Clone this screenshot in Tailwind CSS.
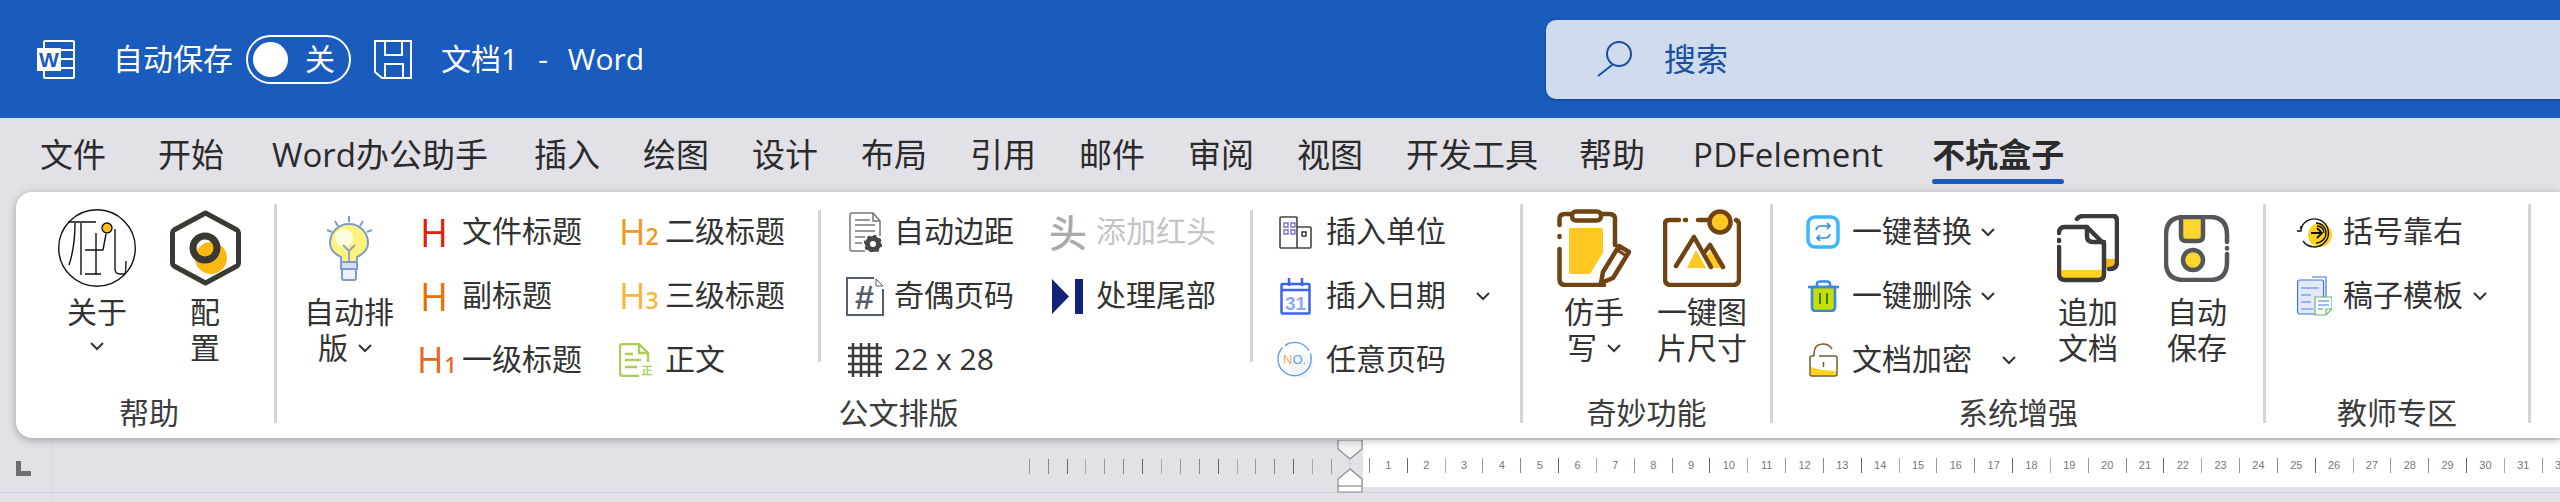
<!DOCTYPE html>
<html lang="zh-CN">
<head>
    <meta charset="UTF-8">
    <title>文档1 - Word</title>
    <script src="https://cdn.jsdelivr.net/npm/@tailwindcss/browser@4"></script>
</head>
<body class="w-[2560px] h-[502px] overflow-hidden bg-[#e3e1e8] text-[#333] font-['Open_Sans','Noto_Sans_CJK_SC',sans-serif]">
    <!-- Title bar -->
    <header class="flex items-center h-[118px] bg-[#1a5bbe] text-white text-[30px] leading-none">
        <svg class="ml-[37px] shrink-0" width="38" height="39" viewBox="0 0 38 39" fill="none" stroke="white" stroke-width="2">
            <rect x="7" y="1" width="30" height="37" rx="1"/>
            <path d="M24 10H37M24 19H37M24 28H37"/>
            <rect x="0" y="8" width="24" height="23" fill="white" stroke="none"/>
            <text x="12" y="27" text-anchor="middle" font-size="21" font-weight="700" fill="#1a5bbe" stroke="none" font-family="Liberation Sans">W</text>
        </svg>
        <span class="ml-[38px]">自动保存</span>
        <div class="ml-[13px] flex items-center w-[105px] h-[49px] rounded-full border-2 border-white pl-[5px]">
            <div class="w-[35px] h-[35px] rounded-full bg-white"></div>
            <span class="ml-[17px]">关</span>
        </div>
        <svg class="ml-[23px] shrink-0" width="38" height="39" viewBox="0 0 38 39" fill="none" stroke="white" stroke-width="2">
            <path d="M1 1H37V38H8L1 32Z"/>
            <path d="M11 1V15H28V1M11 38V24H29V38"/>
        </svg>
        <span class="ml-[29px]">文档1</span>
        <span class="ml-[20px]">-</span>
        <span class="ml-[20px]">Word</span>
        <div class="ml-auto flex items-center w-[1014px] h-[79px] rounded-l-[10px] bg-[#d0dbee] shadow-[0_1px_3px_rgba(0,0,0,0.3)] text-[#1a4f9f] text-[32px]">
            <svg class="ml-[51px]" width="36" height="36" viewBox="0 0 36 36" fill="none" stroke="#1a4f9f" stroke-width="2">
                <circle cx="22" cy="13" r="12"/>
                <path d="M15 24L1 35"/>
            </svg>
            <span class="ml-[31px]">搜索</span>
        </div>
    </header>

    <!-- Tabs -->
    <nav class="flex items-start h-[74px] pt-[15px] pl-[40px] gap-[43px] text-[33px] leading-[44px] text-[#2b2b2b]">
        <span class="mr-[9px]">文件</span>
        <span class="mr-[5px]">开始</span>
        <span class="mr-[3px]">Word办公助手</span>
        <span>插入</span>
        <span>绘图</span>
        <span>设计</span>
        <span>布局</span>
        <span>引用</span>
        <span>邮件</span>
        <span>审阅</span>
        <span>视图</span>
        <span class="mr-[-2px]">开发工具</span>
        <span class="mr-[5px]">帮助</span>
        <span class="mr-[6px] tracking-[0.3px]">PDFelement</span>
        <div class="flex flex-col">
            <span class="font-bold">不坑盒子</span>
            <div class="mt-[2px] h-[5px] rounded-sm bg-[#1a5bbe]"></div>
        </div>
    </nav>

    <!-- Ribbon -->
    <main class="relative z-10 flex ml-4 h-[246px] rounded-l-[16px] bg-white shadow-[0_2px_8px_rgba(0,0,0,0.3)] text-[30px] leading-none">
        <!-- 帮助 -->
        <section class="flex flex-col w-[258px] shrink-0">
            <div class="flex h-[203px] pt-2 pl-[31px]">
                <div class="flex flex-col items-center w-[100px] leading-[36px]">
                    <div class="flex items-center justify-center h-[94px] pt-[2px]">
                        <svg width="78" height="78" viewBox="0 0 78 78" fill="none" stroke="#111" stroke-width="1.4">
                            <circle cx="39" cy="39" r="38.3"/>
                            <path d="M10 13H38M17 14Q17 38 11 56M23 14V66M38 24V66M27 41H45M27 65H43M48 25L45 41M57 20V60Q57 65 62 65H66Q68 65 68 52"/>
                            <circle cx="49" cy="19" r="5" fill="#fdc010"/>
                        </svg>
                    </div>
                    <span>关于</span>
                    <svg class="mt-[12px]" width="14" height="9" viewBox="0 0 14 9" fill="none" stroke="#333" stroke-width="2"><path d="M1 1L7 7L13 1"/></svg>
                </div>
                <div class="flex flex-col items-center w-[100px] ml-2 leading-[36px]">
                    <div class="flex items-center justify-center h-[94px] pt-[2px]">
                        <svg width="71" height="76" viewBox="0 0 71 76" fill="none">
                            <circle cx="41" cy="48" r="16" fill="#fdb913"/>
                            <path d="M35.5 3L67 20Q68.5 21 68.5 23V53Q68.5 55 67 56L35.5 73L4 56Q2.5 55 2.5 53V23Q2.5 21 4 20Z" stroke="#3a3a32" stroke-width="5" stroke-linejoin="round"/>
                            <circle cx="35" cy="38" r="12" stroke="#3a3a32" stroke-width="7"/>
                        </svg>
                    </div>
                    <span>配</span>
                    <span>置</span>
                </div>
            </div>
            <div class="h-[36px] flex items-center justify-center pl-2 text-[#3c3c3c]">帮助</div>
        </section>
        <div class="w-[3px] h-[219px] mt-3 bg-[#d4d4d4] shrink-0"></div>

        <!-- 公文排版 -->
        <section class="flex flex-col w-[1243px] shrink-0">
            <div class="flex h-[203px] pt-2 pl-[22px]">
                <div class="flex flex-col items-center w-[100px] leading-[36px] shrink-0">
                    <div class="flex items-center justify-center h-[94px] pt-[2px]">
                        <svg width="47" height="65" viewBox="0 0 47 65" fill="none">
                            <path d="M23 0V6M9 5L12 10M37 5L34 10M1 14L6 16M46 14L41 16" stroke="#7e9cc9" stroke-width="2"/>
                            <path d="M15 46V41Q4 36 4 27A19 19 0 0 1 42 27Q42 36 31 41V46Z" fill="#fff27f" stroke="#7e9cc9" stroke-width="2"/>
                            <circle cx="18" cy="22" r="9" fill="#fffde0"/>
                            <path d="M23 46V35L17 29M23 35L29 29" stroke="#8ea6cc" stroke-width="2"/>
                            <rect x="15" y="46" width="16" height="7" fill="#d9dcf5" stroke="#7e9cc9" stroke-width="2"/>
                            <rect x="16" y="53" width="14" height="11" rx="2" fill="#eef0fb" stroke="#7e9cc9" stroke-width="2"/>
                        </svg>
                    </div>
                    <span>自动排</span>
                    <div class="flex items-center pr-2">
                        <span>版</span>
                        <svg class="ml-[10px]" width="14" height="9" viewBox="0 0 14 9" fill="none" stroke="#333" stroke-width="2"><path d="M1 1L7 7L13 1"/></svg>
                    </div>
                </div>

                <div class="ml-[18px] shrink-0">
                    <div class="flex items-center h-16">
                        <span class="w-[34px] mr-[11px] text-center text-[38px] font-medium text-[#e0200f]">H</span><span class="mb-[3px]">文件标题</span>
                    </div>
                    <div class="flex items-center h-16">
                        <span class="w-[34px] mr-[11px] text-center text-[38px] font-medium text-[#e87000]">H</span><span class="mb-[3px]">副标题</span>
                    </div>
                    <div class="flex items-center h-16">
                        <span class="w-[34px] mr-[11px] flex items-baseline text-[36px] font-medium text-[#e8671e]">H<span class="ml-[1px] text-[21px] font-semibold">1</span></span><span class="mb-[3px]">一级标题</span>
                    </div>
                </div>

                <div class="ml-[37px] shrink-0">
                    <div class="flex items-center h-16">
                        <span class="w-[34px] mr-3 flex items-baseline text-[36px] font-medium text-[#ee9a1e]">H<span class="text-[23px] font-semibold">2</span></span><span class="mb-[3px]">二级标题</span>
                    </div>
                    <div class="flex items-center h-16">
                        <span class="w-[34px] mr-3 flex items-baseline text-[36px] font-medium text-[#f3b83a]">H<span class="text-[23px] font-semibold">3</span></span><span class="mb-[3px]">三级标题</span>
                    </div>
                    <div class="flex items-center h-16">
                        <svg class="mr-3" width="34" height="34" viewBox="0 0 34 34" fill="none" stroke="#a9cf55" stroke-width="2.4">
                            <path d="M29 19V10L20 1H4Q1 1 1 4V30Q1 33 4 33H20"/>
                            <path d="M20 1V10H29M6 11H14M6 17H22M6 24H18"/>
                            <text x="28" y="32" text-anchor="middle" font-size="11" font-weight="700" fill="#a9cf55" stroke="none">正</text>
                        </svg>
                        <span class="mb-[3px]">正文</span>
                    </div>
                </div>

                <div class="w-[3px] h-[152px] mt-[10px] ml-[33px] bg-[#d4d4d4] shrink-0"></div>

                <div class="ml-[25px] shrink-0">
                    <div class="flex items-center h-16">
                        <span class="flex justify-center w-[38px] mr-[10px]">
                            <svg width="33" height="40" viewBox="0 0 33 40" fill="none" stroke="#777" stroke-width="1.5">
                                <path d="M16 39H3Q1 39 1 37V3Q1 1 3 1H24L31 9V24"/>
                                <path d="M24 1V9H31M6 8H21M6 13H26M6 19H26M6 25H16M6 31H13"/>
                                <circle cx="24" cy="32" r="5.5" stroke="#474747" stroke-width="5"/>
                                <circle cx="24" cy="32" r="8" stroke="#474747" stroke-width="2.4" stroke-dasharray="3 3.3"/>
                            </svg>
                        </span>
                        <span class="mb-[3px]">自动边距</span>
                    </div>
                    <div class="flex items-center h-16">
                        <svg class="mr-[10px]" width="38" height="39" viewBox="0 0 38 39" fill="none" stroke="#555f6e" stroke-width="2">
                            <path d="M37 12V38H1V1H28"/>
                            <path d="M30 2V9H37L30 2Z" stroke-width="1"/>
                            <text x="18" y="32" text-anchor="middle" font-size="34" font-weight="700" font-style="italic" fill="#555f6e" stroke="none" font-family="Liberation Sans">#</text>
                        </svg>
                        <span class="mb-[3px]">奇偶页码</span>
                    </div>
                    <div class="flex items-center h-16">
                        <span class="flex justify-center w-[38px] mr-[10px]">
                            <svg width="34" height="34" viewBox="0 0 34 34" fill="none" stroke="#3a3a3a" stroke-width="2.4">
                                <path d="M5 0V34M13 0V34M21 0V34M29 0V34M0 5H34M0 13H34M0 21H34M0 29H34"/>
                            </svg>
                        </span>
                        <span class="mb-[3px]">22 x 28</span>
                    </div>
                </div>

                <div class="ml-[35px] shrink-0">
                    <div class="flex items-center h-16 text-[#c4c4c4]">
                        <span class="w-[36px] mr-[11px] text-center text-[38px] font-medium text-[#aaa]">头</span><span class="mb-[3px]">添加红头</span>
                    </div>
                    <div class="flex items-center h-16">
                        <span class="flex justify-center w-[36px] mr-[11px]">
                            <svg width="31" height="35" viewBox="0 0 31 35" fill="#14237a"><path d="M0 0L17 17.5L0 35Z"/><rect x="23" y="0" width="8" height="35"/></svg>
                        </span>
                        <span class="mb-[3px]">处理尾部</span>
                    </div>
                </div>

                <div class="w-[3px] h-[152px] mt-[10px] ml-[34px] bg-[#d4d4d4] shrink-0"></div>

                <div class="ml-[24px] shrink-0">
                    <div class="flex items-center h-16">
                        <span class="flex justify-center w-[37px] mr-3">
                            <svg width="33" height="33" viewBox="0 0 33 33" fill="none" stroke="#444" stroke-width="1.6">
                                <path d="M18 32H2Q1 32 1 31V2Q1 1 2 1H17Q18 1 18 2V32H31Q32 32 32 31V12Q32 11 31 11H18"/>
                                <path d="M5 7H9V11H5ZM12 7H16V11H12ZM5 14H9V18H5ZM12 14H16V18H12Z" stroke="#7a6fd8" stroke-width="1.4"/>
                                <rect x="23" y="16" width="4" height="4"/>
                            </svg>
                        </span>
                        <span class="mb-[3px]">插入单位</span>
                    </div>
                    <div class="flex items-center h-16">
                        <span class="flex justify-center w-[37px] mr-3">
                            <svg width="31" height="37" viewBox="0 0 31 37" fill="none" stroke="#3b63f0" stroke-width="2.5">
                                <rect x="1.5" y="6" width="28" height="29.5" rx="1"/>
                                <path d="M2 12H29M9 0V8M22 0V8"/>
                                <text x="15.5" y="32" text-anchor="middle" font-size="19" font-weight="700" fill="#8ea9f5" stroke="none" font-family="Liberation Sans">31</text>
                            </svg>
                        </span>
                        <span class="mb-[3px]">插入日期</span>
                        <svg class="ml-[30px]" width="14" height="9" viewBox="0 0 14 9" fill="none" stroke="#333" stroke-width="2"><path d="M1 1L7 7L13 1"/></svg>
                    </div>
                    <div class="flex items-center h-16">
                        <span class="flex justify-center w-[37px] mr-3">
                            <svg width="40" height="40" viewBox="0 0 40 40" fill="none">
                                <circle cx="26" cy="27" r="13" fill="#f2f4fb"/>
                                <circle cx="19" cy="19" r="18" stroke="#5aa0f5" stroke-width="1.5" stroke-dasharray="70 3 30 3"/>
                                <text x="19" y="24" text-anchor="middle" font-size="14" fill="#5aa0f5" font-family="Liberation Sans"><tspan fill="#f4a85a">N</tspan>O.</text>
                            </svg>
                        </span>
                        <span class="mb-[3px]">任意页码</span>
                    </div>
                </div>
            </div>
            <div class="h-[36px] flex items-center justify-center text-[#3c3c3c]">公文排版</div>
        </section>
        <div class="w-[3px] h-[219px] mt-3 bg-[#d4d4d4] shrink-0"></div>

        <!-- 奇妙功能 -->
        <section class="flex flex-col w-[247px] shrink-0">
            <div class="flex h-[203px] pt-2 pl-[27px]">
                <div class="flex flex-col items-center w-[88px] leading-[36px]">
                    <div class="flex items-center justify-center h-[94px] pt-[2px]">
                        <svg width="74" height="78" viewBox="0 0 74 78" fill="none" stroke="#6f4312" stroke-width="4.5" stroke-linecap="round" stroke-linejoin="round">
                            <path d="M12 19H44Q46 19 46 21V44L33 65H14Q12 65 12 63V21Q12 19 14 19Z" fill="#ffc823" stroke="none"/>
                            <path d="M13 5H8Q2.5 5 2.5 10V16M2.5 27V28M2.5 40V70Q2.5 76 8 76H47"/>
                            <path d="M44 5H52Q58 5 58 10V36"/>
                            <rect x="15" y="2.5" width="29" height="9" rx="4" fill="#fff"/>
                            <path d="M44 74L46 63L62 37L72 43L56 69Z" fill="#fff"/>
                            <path d="M60 41L68 46" stroke-width="3"/>
                        </svg>
                    </div>
                    <span>仿手</span>
                    <div class="flex items-center">
                        <span>写</span>
                        <svg class="ml-[10px]" width="14" height="9" viewBox="0 0 14 9" fill="none" stroke="#333" stroke-width="2"><path d="M1 1L7 7L13 1"/></svg>
                    </div>
                </div>
                <div class="flex flex-col items-center w-[92px] ml-[18px] leading-[36px]">
                    <div class="flex items-center justify-center h-[94px] pt-[2px]">
                        <svg width="78" height="78" viewBox="0 0 78 78" fill="none" stroke="#6f4312" stroke-width="4.5" stroke-linecap="round" stroke-linejoin="round">
                            <path d="M16 11H6Q2 11 2 15V70Q2 76 8 76H70Q76 76 76 70V16Q76 12 73 11M22 11H23M35 11H46"/>
                            <circle cx="57" cy="13" r="10.5" fill="#ffc823"/>
                            <path d="M24 59L33 41L43 59ZM43 47L47 42L60 59H45Z" fill="#ffc823" stroke="none"/>
                            <path d="M13 57L31 28L48 58M41 44L47 36L60 58"/>
                        </svg>
                    </div>
                    <span>一键图</span>
                    <span>片尺寸</span>
                </div>
            </div>
            <div class="h-[36px] flex items-center justify-center text-[#3c3c3c]">奇妙功能</div>
        </section>
        <div class="w-[3px] h-[219px] mt-3 bg-[#d4d4d4] shrink-0"></div>

        <!-- 系统增强 -->
        <section class="flex flex-col w-[490px] shrink-0">
            <div class="flex h-[203px] pt-2 pl-[33px]">
                <div class="shrink-0">
                    <div class="flex items-center h-16">
                        <svg class="mr-3" width="34" height="34" viewBox="0 0 34 34" fill="none">
                            <rect x="2" y="2" width="30" height="30" rx="7" stroke="#3db5ff" stroke-width="3.5"/>
                            <path d="M10 15Q11 11 15 11H24M21 8L24 11L21 14M24 19Q23 23 19 23H11M14 20L11 23L14 26" stroke="#2f8fe8" stroke-width="1.7"/>
                        </svg>
                        <span class="mb-[3px]">一键替换</span>
                        <svg class="ml-[9px]" width="14" height="9" viewBox="0 0 14 9" fill="none" stroke="#333" stroke-width="2"><path d="M1 1L7 7L13 1"/></svg>
                    </div>
                    <div class="flex items-center h-16">
                        <span class="flex justify-center w-[34px] mr-3">
                            <svg width="31" height="32" viewBox="0 0 31 32" fill="none" stroke="#3a86e0" stroke-width="2.6">
                                <path d="M4 7V27Q4 31 8 31H23Q27 31 27 27V7Z" fill="#c4e000"/>
                                <path d="M0 7H31M9 7V4Q9 1.5 12 1.5H19Q22 1.5 22 4V7"/>
                                <path d="M12 13V24M19 13V24" stroke="#3a7a2a" stroke-width="2"/>
                            </svg>
                        </span>
                        <span class="mb-[3px]">一键删除</span>
                        <svg class="ml-[9px]" width="14" height="9" viewBox="0 0 14 9" fill="none" stroke="#333" stroke-width="2"><path d="M1 1L7 7L13 1"/></svg>
                    </div>
                    <div class="flex items-center h-16">
                        <span class="flex justify-center w-[34px] mr-3">
                            <svg width="29" height="34" viewBox="0 0 29 34" fill="none" stroke="#7b5a2a" stroke-width="1.5">
                                <path d="M2 24Q14 28 27 28V31Q27 32.5 25 32.5H4Q2 32.5 2 31Z" fill="#ffd21e" stroke="none"/>
                                <path d="M5 13V11Q5 1 14 1Q20 1 23 6"/>
                                <path d="M5 13H3Q1 13 1 15V31Q1 33 3 33H26Q28 33 28 31V15Q28 13 26 13H10M14 13H24"/>
                                <path d="M14.5 19V24"/>
                            </svg>
                        </span>
                        <span class="mb-[3px]">文档加密</span>
                        <svg class="ml-[30px]" width="14" height="9" viewBox="0 0 14 9" fill="none" stroke="#333" stroke-width="2"><path d="M1 1L7 7L13 1"/></svg>
                    </div>
                </div>
                <div class="flex flex-col items-center w-[70px] ml-[37px] leading-[36px] shrink-0">
                    <div class="flex items-center justify-center h-[94px] pt-[2px]">
                        <svg width="62" height="69" viewBox="0 0 62 69" fill="none" stroke="#3b3b3b" stroke-width="4.5" stroke-linecap="round" stroke-linejoin="round">
                            <path d="M48 45H58V52L51 54H48Z" fill="#fdb913" stroke="none"/>
                            <path d="M4 56H45V60Q45 64 41 64H8Q4 64 4 60Z" fill="#ffd21e" stroke="none"/>
                            <path d="M20 5Q22 2 26 2H56Q60 2 60 7V48Q60 55 52 55"/>
                            <path d="M2 19Q2 13 8 13H30L47 30V60Q47 66 41 66H8Q2 66 2 60V33M2 26V27"/>
                            <path d="M30 13V22Q30 28 36 28H47"/>
                        </svg>
                    </div>
                    <span>追加</span>
                    <span>文档</span>
                </div>
                <div class="flex flex-col items-center w-[70px] ml-[39px] leading-[36px] shrink-0">
                    <div class="flex items-center justify-center h-[94px] pt-[2px]">
                        <svg width="66" height="67" viewBox="0 0 66 67" fill="none" stroke="#54565c" stroke-width="4.5" stroke-linecap="round" stroke-linejoin="round">
                            <path d="M63 27V20Q63 2 46 2H20Q2 2 2 20V47Q2 65 20 65H46Q63 65 63 47V39M63 33V33.5"/>
                            <path d="M17 2H39V21Q39 26 34 26H22Q17 26 17 21Z" fill="#ffd630"/>
                            <circle cx="29" cy="45" r="10" fill="#ffd630"/>
                        </svg>
                    </div>
                    <span>自动</span>
                    <span>保存</span>
                </div>
            </div>
            <div class="h-[36px] flex items-center justify-center text-[#3c3c3c]">系统增强</div>
        </section>
        <div class="w-[3px] h-[219px] mt-3 bg-[#d4d4d4] shrink-0"></div>

        <!-- 教师专区 -->
        <section class="flex flex-col w-[262px] shrink-0">
            <div class="h-[203px] pt-2 pl-[31px]">
                <div class="flex items-center h-16">
                    <svg class="mr-[11px]" width="35" height="31" viewBox="0 0 35 31" fill="none" stroke="#111" stroke-width="1.4">
                        <circle cx="23" cy="18" r="12" fill="#ffd21e" stroke="none"/>
                        <path d="M4 12A14 14 0 1 1 6 24"/>
                        <path d="M4 9V14L0 14"/>
                        <path d="M19 6A9 9 0 0 1 19 26M20 9A7 7 0 0 1 27 16"/>
                        <path d="M14 16H24M20 11L25 16L20 21" stroke-width="1.8"/>
                    </svg>
                    <span class="mb-[3px]">括号靠右</span>
                </div>
                <div class="flex items-center h-16">
                    <svg class="mr-[11px]" width="35" height="40" viewBox="0 0 35 40" fill="none" stroke-width="1.2">
                        <path d="M15 1H29V22" stroke="#3b74ea"/>
                        <rect x="0.6" y="4" width="26" height="34" rx="2" fill="#e3e9f7" stroke="#3b74ea"/>
                        <path d="M4 12H22M4 19H14M4 26H14M4 33H16" stroke="#7ea2ee" stroke-width="1.5"/>
                        <path d="M18 21H35V33L29 39H18Z" fill="#fff" stroke="#66b36a"/>
                        <path d="M21 25H32M21 29H32M21 33H26" stroke="#3b74ea"/>
                        <path d="M29 39V33H35" stroke="#66b36a"/>
                    </svg>
                    <span class="mb-[3px]">稿子模板</span>
                    <svg class="ml-[10px]" width="14" height="9" viewBox="0 0 14 9" fill="none" stroke="#333" stroke-width="2"><path d="M1 1L7 7L13 1"/></svg>
                </div>
            </div>
            <div class="h-[36px] flex items-center justify-center text-[#3c3c3c]">教师专区</div>
        </section>
        <div class="w-[3px] h-[219px] mt-3 bg-[#d4d4d4] shrink-0"></div>
    </main>

    <!-- Ruler -->
    <div class="flex h-[55px] border-b border-[#d4d2da]">
        <div class="flex items-center w-[53px] pl-4 pt-[7px] border-r border-[#d8d6de] shrink-0">
            <svg width="15" height="15" viewBox="0 0 15 15" fill="#6e6e6e"><path d="M0 0H5V10H15V15H0Z"/></svg>
        </div>
        <div id="rulerLeft" class="flex justify-end items-center w-[1284px] pt-[3px] pr-[5px] shrink-0"></div>
        <svg class="mt-[2px] shrink-0" width="26" height="53" viewBox="0 0 26 53" fill="#fff" stroke="#8a8a8a" stroke-width="1.2">
            <path d="M1 0H25V9L13 19L1 9Z" fill="#f4f4f6"/>
            <path d="M13 19V29" stroke="#cfcfcf"/>
            <path d="M13 29L25 39V52H1V39Z"/>
            <path d="M1 46H25"/>
        </svg>
        <div id="rulerRight" class="flex items-center flex-1 h-[47px] mt-[2px] pl-[6px] pt-[3px] bg-white overflow-hidden"></div>
    </div>
    <div class="w-[53px] h-[8px] border-r border-[#d8d6de]"></div>

    <script>
        // ruler ticks and numbers
        const tickColors = ['bg-[#999]', 'bg-[#888]', 'bg-[#666]', 'bg-[#aaa]'];
        const left = document.getElementById('rulerLeft');
        for (let i = 0; i < 17; i++) {
            const tick = document.createElement('div');
            tick.className = 'w-px h-[15px] ml-[17.9px] ' + tickColors[i % 4];
            left.appendChild(tick);
        }
        const right = document.getElementById('rulerRight');
        for (let n = 1; n <= 32; n++) {
            const tick = document.createElement('div');
            tick.className = 'w-px h-[15px] shrink-0 ' + tickColors[n % 4];
            const num = document.createElement('span');
            num.className = 'w-[36.83px] shrink-0 text-center text-[11px] leading-none text-[#777] font-["Liberation_Sans"]';
            num.textContent = n;
            right.appendChild(tick);
            right.appendChild(num);
        }
    </script>
</body>
</html>
